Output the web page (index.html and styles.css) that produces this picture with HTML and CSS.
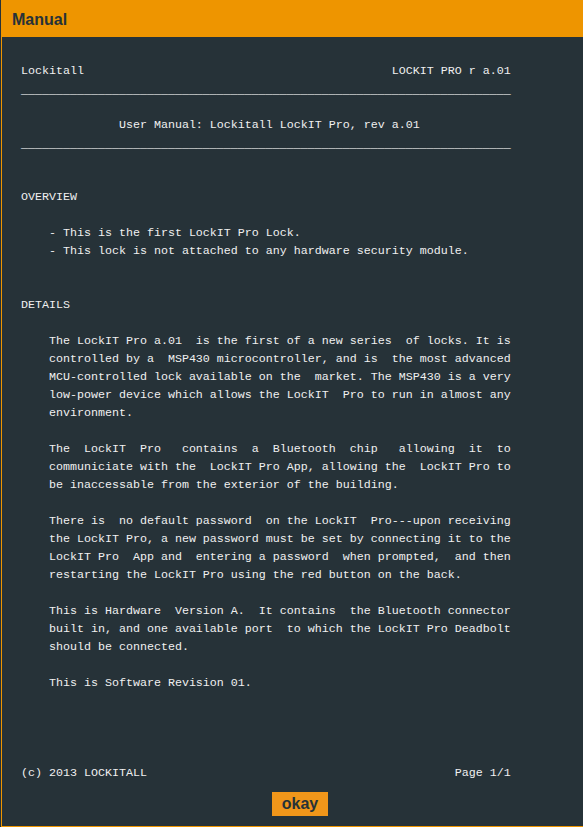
FILE: index.html
```html
<!DOCTYPE html>
<html>
<head>
<meta charset="utf-8">
<title>Manual</title>
<link rel="stylesheet" href="styles.css">
</head>
<body>
<div class="dialog">
  <div class="header">Manual</div>
  <pre class="manual">Lockitall                                            LOCKIT PRO r a.01
<span class="rule">______________________________________________________________________</span>

              User Manual: Lockitall LockIT Pro, rev a.01
<span class="rule">______________________________________________________________________</span>


OVERVIEW

    - This is the first LockIT Pro Lock.
    - This lock is not attached to any hardware security module.


DETAILS

    The LockIT Pro a.01  is the first of a new series  of locks. It is
    controlled by a  MSP430 microcontroller, and is  the most advanced
    MCU-controlled lock available on the  market. The MSP430 is a very
    low-power device which allows the LockIT  Pro to run in almost any
    environment.

    The  LockIT  Pro   contains  a  Bluetooth  chip   allowing  it  to
    communiciate with the  LockIT Pro App, allowing the  LockIT Pro to
    be inaccessable from the exterior of the building.

    There is  no default password  on the LockIT  Pro---upon receiving
    the LockIT Pro, a new password must be set by connecting it to the
    LockIT Pro  App and  entering a password  when prompted,  and then
    restarting the LockIT Pro using the red button on the back.

    This is Hardware  Version A.  It contains  the Bluetooth connector
    built in, and one available port  to which the LockIT Pro Deadbolt
    should be connected.

    This is Software Revision 01.




(c) 2013 LOCKITALL                                            Page 1/1</pre>
  <div class="actions"><button class="okay">okay</button></div>
</div>
</body>
</html>
```
FILE: styles.css
```css
html, body {
  margin: 0;
  padding: 0;
}
body {
  background: #263238;
  width: 583px;
  height: 827px;
  overflow: hidden;
}
.dialog {
  margin-left: 1px;
  width: 598px;
  box-sizing: border-box;
  border-left: 1px solid #ee9500;
  border-right: 1px solid #ee9500;
  border-bottom: 1px solid #ee9500;
  background: #263238;
}
.header {
  height: 37px;
  background: #ee9500;
  color: #263238;
  font-family: "Liberation Sans", Arial, sans-serif;
  font-weight: bold;
  font-size: 16px;
  line-height: 39px;
  padding-left: 10px;
}
.manual {
  margin: 25px 0 0 19px;
  font-family: "Liberation Mono", "Courier New", monospace;
  font-size: 11.667px;
  line-height: 18px;
  color: #f0f0f0;
  white-space: pre;
}
.rule {
  line-height: 10px;
  vertical-align: -2px;
  color: #ffffff;
}
.actions {
  display: flex;
  justify-content: center;
  padding: 10px 0 10px;
}
.okay {
  height: 24px;
  padding: 0 10px;
  border: none;
  margin: 0;
  background: #f0961a;
  color: #263238;
  font-family: "Liberation Sans", Arial, sans-serif;
  font-weight: bold;
  font-size: 16px;
  line-height: 24px;
}
```
